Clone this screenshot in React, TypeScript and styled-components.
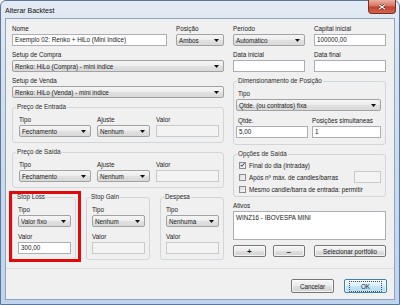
import React from "react";
import styled, { createGlobalStyle, css } from "styled-components";

const GlobalStyle = createGlobalStyle`
  html, body {
    margin: 0;
    padding: 0;
    background: #ffffff;
  }
  body {
    font-family: "Liberation Sans", Arial, sans-serif;
    font-size: 6.3px;
    color: #1a1a1a;
  }
  * {
    box-sizing: border-box;
  }
`;

const Window = styled.div`
  width: 400px;
  height: 305px;
  border: 1px solid #5a769b;
  border-radius: 6px 6px 0 0;
  background: linear-gradient(180deg, #e3eaf3 0%, #d2dfee 30%, #bfd4ec 100%);
  padding: 0 4px 4px 4px;
  display: flex;
  flex-direction: column;
`;

const TitleBar = styled.div`
  height: 17px;
  display: flex;
  align-items: center;
  justify-content: space-between;
`;

const TitleText = styled.span`
  font-size: 7px;
  color: #111;
  padding-top: 1px;
`;

const CloseButton = styled.div`
  width: 28px;
  height: 14px;
  margin: -1px -1px 0 0;
  align-self: flex-start;
  border: 1px solid #7a2d24;
  border-top: none;
  border-radius: 0 0 4px 4px;
  background: linear-gradient(180deg, #eab0a2 0%, #d97a66 42%, #c4432e 55%, #d0674c 100%);
  display: flex;
  align-items: center;
  justify-content: center;
`;

const Client = styled.div`
  flex: 1;
  border: 1px solid #8ea4c0;
  background: #f0f0f0;
  display: flex;
  flex-direction: column;
`;

const Body = styled.div`
  flex: 1;
  padding: 6px 0 0 6px;
  display: grid;
  grid-template-columns: 212px 153px;
  column-gap: 9px;
  align-items: start;
`;

const Column = styled.div`
  display: flex;
  flex-direction: column;
  gap: 5px;
`;

const Row = styled.div<{ $cols: string; $gap?: number }>`
  display: grid;
  grid-template-columns: ${(p) => p.$cols};
  column-gap: ${(p) => p.$gap ?? 9}px;
`;

const Field = styled.div`
  display: flex;
  flex-direction: column;
  min-width: 0;
`;

const Label = styled.div<{ $inset?: number }>`
  height: 8px;
  line-height: 8px;
  margin-bottom: 1px;
  padding-left: ${(p) => p.$inset ?? 0}px;
  white-space: nowrap;
`;

const SelectBox = styled.div`
  height: 12px;
  display: flex;
  align-items: center;
  justify-content: space-between;
  padding: 0 4px 0 2px;
  border: 1px solid #a2a2a2;
  border-radius: 2px;
  background: linear-gradient(180deg, #f5f5f5 0%, #ededed 45%, #e0e0e0 55%, #d9d9d9 100%);
  white-space: nowrap;
  overflow: hidden;
`;

const TextBox = styled.div<{ $disabled?: boolean; $width?: number }>`
  height: 12px;
  line-height: 10px;
  padding: 0 2px;
  width: ${(p) => (p.$width ? `${p.$width}px` : "auto")};
  border: 1px solid ${(p) => (p.$disabled ? "#cacaca" : "#abaeb4")};
  background: ${(p) => (p.$disabled ? "#f3f3f3" : "#ffffff")};
  white-space: nowrap;
`;

const GroupBox = styled.div<{ $pad?: string; $marked?: boolean }>`
  position: relative;
  margin-top: 4px;
  border: 1px solid #d1d6da;
  border-radius: 3px;
  padding: ${(p) => p.$pad ?? "8px 4px 5px 6px"};
  ${(p) =>
    p.$marked &&
    css`
      &::after {
        content: "";
        position: absolute;
        top: -7px;
        left: -4px;
        right: -6px;
        bottom: -3px;
        border: 3px solid #e10a0a;
        pointer-events: none;
      }
    `}
`;

const GroupTitle = styled.span`
  position: absolute;
  top: -5px;
  left: 3px;
  padding: 0 1px;
  line-height: 8px;
  background: #f0f0f0;
  color: #2a2a2a;
  white-space: nowrap;
`;

const GroupStack = styled.div<{ $gap: number }>`
  display: flex;
  flex-direction: column;
  gap: ${(p) => p.$gap}px;
`;

const CheckRow = styled.div`
  height: 12px;
  display: flex;
  align-items: center;
  gap: 3px;
  white-space: nowrap;
`;

const CheckBox = styled.div`
  width: 7px;
  height: 7px;
  border: 1px solid #8c8c8c;
  background: linear-gradient(135deg, #dcdcdc 0%, #f7f7f7 100%);
  display: flex;
  align-items: center;
  justify-content: center;
  flex-shrink: 0;
`;

const Spacer = styled.div`
  flex: 1;
`;

const ListBox = styled.div`
  height: 29px;
  border: 1px solid #abaeb4;
  background: #ffffff;
  padding: 2px 2px;
  line-height: 8px;
`;

const Button = styled.div<{ $primary?: boolean; $width?: number }>`
  height: ${(p) => (p.$width ? 14 : 12)}px;
  width: ${(p) => (p.$width ? `${p.$width}px` : "auto")};
  display: flex;
  align-items: center;
  justify-content: center;
  border: 1px solid ${(p) => (p.$primary ? "#3c7fb1" : "#767676")};
  border-radius: 2px;
  background: ${(p) =>
    p.$primary
      ? "linear-gradient(180deg, #eef8fe 0%, #dcf1fc 48%, #c3e7fc 52%, #addcf6 100%)"
      : "linear-gradient(180deg, #f4f4f4 0%, #ececec 48%, #dfdfdf 52%, #d2d2d2 100%)"};
  box-shadow: inset 0 0 0 1px rgba(255, 255, 255, 0.7);
  white-space: nowrap;
`;

const FocusRing = styled.span`
  border: 1px dotted #4a4a4a;
  padding: 1px 11px;
  line-height: 7px;
`;

const ButtonText = styled.span<{ $bold?: boolean }>`
  font-weight: ${(p) => (p.$bold ? 700 : 400)};
  font-size: ${(p) => (p.$bold ? "8px" : "6.3px")};
`;

const Footer = styled.div`
  height: 31px;
  border-top: 1px solid #dcdcdc;
  padding: 10px 7px 0 0;
  display: flex;
  justify-content: flex-end;
  align-items: flex-start;
  gap: 10px;
`;

const Arrow = () => (
  <svg width="5" height="3" viewBox="0 0 5 3">
    <path d="M0 0h5L2.5 3z" fill="#111" />
  </svg>
);

const Select: React.FC<{ value: string }> = ({ value }) => (
  <SelectBox>
    <span>{value}</span>
    <Arrow />
  </SelectBox>
);

const Check: React.FC<{ checked?: boolean }> = ({ checked }) => (
  <CheckBox>
    {checked && (
      <svg width="6" height="6" viewBox="0 0 6 6">
        <path d="M0.8 3 L2.3 4.6 L5.3 0.9" stroke="#23407a" strokeWidth="1.2" fill="none" />
      </svg>
    )}
  </CheckBox>
);

const PriceGroup: React.FC<{ title: string }> = ({ title }) => (
  <GroupBox>
    <GroupTitle>{title}</GroupTitle>
    <Row $cols="72px 53px 1fr" $gap={6}>
      <Field>
        <Label>Tipo</Label>
        <Select value="Fechamento" />
      </Field>
      <Field>
        <Label>Ajuste</Label>
        <Select value="Nenhum" />
      </Field>
      <Field>
        <Label>Valor</Label>
        <TextBox $disabled />
      </Field>
    </Row>
  </GroupBox>
);

const StopGroup: React.FC<{ title: string; type: string; value?: string; marked?: boolean }> = ({
  title,
  type,
  value,
  marked,
}) => (
  <GroupBox $pad="8px 4px 5px 5px" $marked={marked}>
    <GroupTitle>{title}</GroupTitle>
    <GroupStack $gap={6}>
      <Field>
        <Label>Tipo</Label>
        <Select value={type} />
      </Field>
      <Field>
        <Label>Valor</Label>
        <TextBox $disabled={value === undefined}>{value}</TextBox>
      </Field>
    </GroupStack>
  </GroupBox>
);

export default function App() {
  return (
    <>
      <GlobalStyle />
      <Window>
        <TitleBar>
          <TitleText>Alterar Backtest</TitleText>
          <CloseButton>
            <svg width="8" height="6" viewBox="0 0 8 6">
              <path d="M1 0.8 L7 5.2 M7 0.8 L1 5.2" stroke="#5a1a12" strokeWidth="2.4" />
              <path d="M1 0.8 L7 5.2 M7 0.8 L1 5.2" stroke="#ffffff" strokeWidth="1.3" />
            </svg>
          </CloseButton>
        </TitleBar>
        <Client>
          <Body>
            <Column>
              <Row $cols="155px 48px">
                <Field>
                  <Label>Nome</Label>
                  <TextBox>Exemplo 02: Renko + HiLo (Mini Indice)</TextBox>
                </Field>
                <Field>
                  <Label>Posição</Label>
                  <Select value="Ambos" />
                </Field>
              </Row>
              <Field>
                <Label>Setup de Compra</Label>
                <Select value="Renko: HiLo (Compra) - mini indice" />
              </Field>
              <Field>
                <Label>Setup de Venda</Label>
                <Select value="Renko: HiLo (Venda) - mini indice" />
              </Field>
              <PriceGroup title="Preço de Entrada" />
              <PriceGroup title="Preço de Saída" />
              <Row $cols="64px 64px 64px" $gap={10}>
                <StopGroup title="Stop Loss" type="Valor fixo" value="300,00" marked />
                <StopGroup title="Stop Gain" type="Nenhum" />
                <StopGroup title="Despesa" type="Nenhuma" />
              </Row>
            </Column>

            <Column>
              <Row $cols="72px 72px">
                <Field>
                  <Label>Período</Label>
                  <Select value="Automático" />
                </Field>
                <Field>
                  <Label>Capital inicial</Label>
                  <TextBox>100000,00</TextBox>
                </Field>
              </Row>
              <Row $cols="72px 72px">
                <Field>
                  <Label>Data inicial</Label>
                  <TextBox />
                </Field>
                <Field>
                  <Label>Data final</Label>
                  <TextBox />
                </Field>
              </Row>
              <GroupBox $pad="8px 4px 6px 2px">
                <GroupTitle>Dimensionamento de Posição</GroupTitle>
                <GroupStack $gap={6}>
                  <Field>
                    <Label $inset={2}>Tipo</Label>
                    <Select value="Qtde. (ou contratos) fixa" />
                  </Field>
                  <Row $cols="72px 1fr" $gap={4}>
                    <Field>
                      <Label $inset={2}>Qtde.</Label>
                      <TextBox>5,00</TextBox>
                    </Field>
                    <Field>
                      <Label>Posições simultaneas</Label>
                      <TextBox>1</TextBox>
                    </Field>
                  </Row>
                </GroupStack>
              </GroupBox>
              <GroupBox $pad="4px 4px 1px 5px">
                <GroupTitle>Opções de Saída</GroupTitle>
                <CheckRow>
                  <Check checked />
                  <span>Final do dia (intraday)</span>
                </CheckRow>
                <CheckRow>
                  <Check />
                  <span>Após nº máx. de candles/barras</span>
                  <Spacer />
                  <TextBox $disabled $width={27} />
                </CheckRow>
                <CheckRow>
                  <Check />
                  <span>Mesmo candle/barra de entrada: permitir</span>
                </CheckRow>
              </GroupBox>
              <Field>
                <Label>Ativos</Label>
                <ListBox>WINZ16 - IBOVESPA MINI</ListBox>
              </Field>
              <Row $cols="72px 72px">
                <Row $cols="1fr 1fr" $gap={7}>
                  <Button>
                    <ButtonText $bold>+</ButtonText>
                  </Button>
                  <Button>
                    <ButtonText $bold>–</ButtonText>
                  </Button>
                </Row>
                <Button>Selecionar portfólio</Button>
              </Row>
            </Column>
          </Body>
          <Footer>
            <Button $width={43}>Cancelar</Button>
            <Button $width={43} $primary>
              <FocusRing>OK</FocusRing>
            </Button>
          </Footer>
        </Client>
      </Window>
    </>
  );
}
